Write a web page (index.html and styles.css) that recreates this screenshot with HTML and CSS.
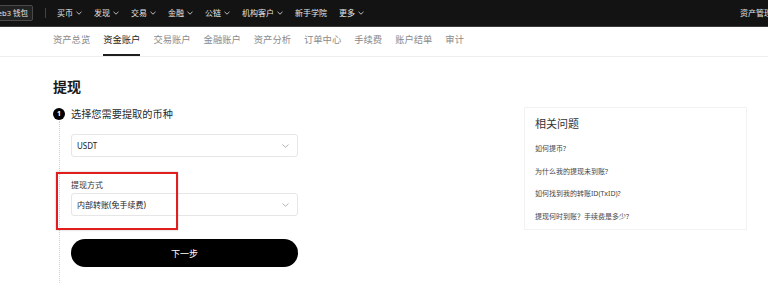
FILE: index.html
```html
<!DOCTYPE html>
<html>
<head>
    <title>提现</title>
    <link rel="stylesheet" href="styles.css">
</head>
<body>
    <div class="topbar">
        <div class="wallet-btn">Web3 钱包</div>
        <div class="divider"></div>
        <div class="menu">
            <span class="menu-item">买币<svg class="caret" viewBox="0 0 6 4"><polyline points="0.5,0.8 3,3.2 5.5,0.8"/></svg></span>
            <span class="menu-item">发现<svg class="caret" viewBox="0 0 6 4"><polyline points="0.5,0.8 3,3.2 5.5,0.8"/></svg></span>
            <span class="menu-item">交易<svg class="caret" viewBox="0 0 6 4"><polyline points="0.5,0.8 3,3.2 5.5,0.8"/></svg></span>
            <span class="menu-item">金融<svg class="caret" viewBox="0 0 6 4"><polyline points="0.5,0.8 3,3.2 5.5,0.8"/></svg></span>
            <span class="menu-item">公链<svg class="caret" viewBox="0 0 6 4"><polyline points="0.5,0.8 3,3.2 5.5,0.8"/></svg></span>
            <span class="menu-item">机构客户<svg class="caret" viewBox="0 0 6 4"><polyline points="0.5,0.8 3,3.2 5.5,0.8"/></svg></span>
            <span class="menu-item">新手学院</span>
            <span class="menu-item">更多<svg class="caret" viewBox="0 0 6 4"><polyline points="0.5,0.8 3,3.2 5.5,0.8"/></svg></span>
        </div>
        <div class="top-right">资产管理</div>
    </div>

    <div class="subnav">
        <span class="tab">资产总览</span>
        <span class="tab active">资金账户</span>
        <span class="tab">交易账户</span>
        <span class="tab">金融账户</span>
        <span class="tab">资产分析</span>
        <span class="tab">订单中心</span>
        <span class="tab">手续费</span>
        <span class="tab">账户结单</span>
        <span class="tab">审计</span>
    </div>

    <div class="main">
        <h1 class="title">提现</h1>
        <div class="content">
            <div class="left">
                <div class="step">
                    <span class="step-num">1</span>
                    <span class="step-text">选择您需要提取的币种</span>
                </div>
                <div class="step-body">
                    <div class="select">
                        <span>USDT</span>
                        <svg class="select-caret" viewBox="0 0 7 4"><polyline points="0.5,0.5 3.5,3.3 6.5,0.5"/></svg>
                    </div>
                    <div class="field">
                        <div class="label">提现方式</div>
                        <div class="select">
                            <span>内部转账(免手续费)</span>
                            <svg class="select-caret" viewBox="0 0 7 4"><polyline points="0.5,0.5 3.5,3.3 6.5,0.5"/></svg>
                        </div>
                    </div>
                    <button class="next">下一步</button>
                    <div class="highlight"></div>
                </div>
            </div>

            <div class="faq">
                <div class="faq-title">相关问题</div>
                <div class="faq-item">如何提币?</div>
                <div class="faq-item">为什么我的提现未到账?</div>
                <div class="faq-item">如何找到我的转账ID(TxID)?</div>
                <div class="faq-item">提现何时到账？手续费是多少?</div>
            </div>
        </div>
    </div>
</body>
</html>
```

FILE: styles.css
```css
body { margin: 0; background: #fff; font-family: "Noto Sans", "Noto Sans CJK SC", sans-serif; color: #222; overflow: hidden; }

.topbar { height: 26px; background: #131313; border-bottom: 1px solid #3a3a3a; display: flex; align-items: center; color: #e4e4e4; font-size: 8px; line-height: 10px; }
.wallet-btn { margin-left: -14px; height: 14px; padding: 0 4px; border: 1px solid #4a4a4a; border-radius: 2px; background: #222; display: flex; align-items: center; font-size: 7.5px; white-space: nowrap; }
.divider { width: 1px; height: 10px; background: #444; margin-left: 12px; }
.menu { display: flex; margin-left: 11px; }
.menu-item { display: flex; align-items: center; margin-right: 12px; white-space: nowrap; }
.caret { width: 6px; height: 4px; margin-left: 3px; fill: none; stroke: #bbb; stroke-width: 1; }
.top-right { margin-left: auto; margin-right: -4px; white-space: nowrap; }

.subnav { height: 29px; border-bottom: 1px solid #eee; display: flex; padding-left: 53px; }
.tab { box-sizing: border-box; height: 29px; display: flex; align-items: center; margin-right: 13px; padding-bottom: 3px; font-size: 9.3px; color: #8a8a8a; border-bottom: 2px solid transparent; white-space: nowrap; }
.tab.active { color: #1e1e1e; border-bottom-color: #1e1e1e; }

.main { padding: 21px 0 0 53px; }
.title { margin: 0; font-size: 14px; line-height: 18px; font-weight: 700; color: #1a1a1a; }
.content { display: flex; margin-top: 11px; }
.left { width: 245px; }

.step { display: flex; align-items: center; height: 14px; }
.step-num { width: 12px; height: 12px; border-radius: 50%; background: #000; color: #fff; font-size: 7px; font-weight: 700; line-height: 12px; text-align: center; }
.step-text { margin-left: 6px; font-size: 10.2px; line-height: 14px; color: #2a2a2a; }

.step-body { position: relative; margin-left: 6px; border-left: 1px dotted #cfcfcf; padding: 13px 0 20px 11px; }
.select { box-sizing: border-box; height: 23px; border: 1px solid #e6e6e6; border-radius: 3px; display: flex; align-items: center; justify-content: space-between; padding: 0 8px 0 5px; font-size: 8px; color: #222; }
.select-caret { width: 7px; height: 4px; fill: none; stroke: #aaa; stroke-width: 0.9; }
.field { margin-top: 22px; }
.label { font-size: 8px; line-height: 12px; margin-bottom: 2px; color: #333; }
.next { display: block; width: 100%; height: 28px; margin-top: 23px; border: none; border-radius: 14px; background: #000; color: #fff; font-family: inherit; font-size: 9px; }

.highlight { position: absolute; left: -4px; top: 51px; width: 122px; height: 58px; box-sizing: border-box; border: 2px solid #e11d1d; box-shadow: 0 0 2px rgba(0, 0, 0, 0.25); }

.faq { box-sizing: border-box; margin-left: 226px; width: 223px; height: 123px; border: 1px solid #f2f2f2; padding: 9px 10px 8px; }
.faq-title { font-size: 11px; line-height: 14px; color: #333; margin-bottom: 7px; }
.faq-item { font-size: 7px; line-height: 22.5px; color: #444; white-space: nowrap; }
```
